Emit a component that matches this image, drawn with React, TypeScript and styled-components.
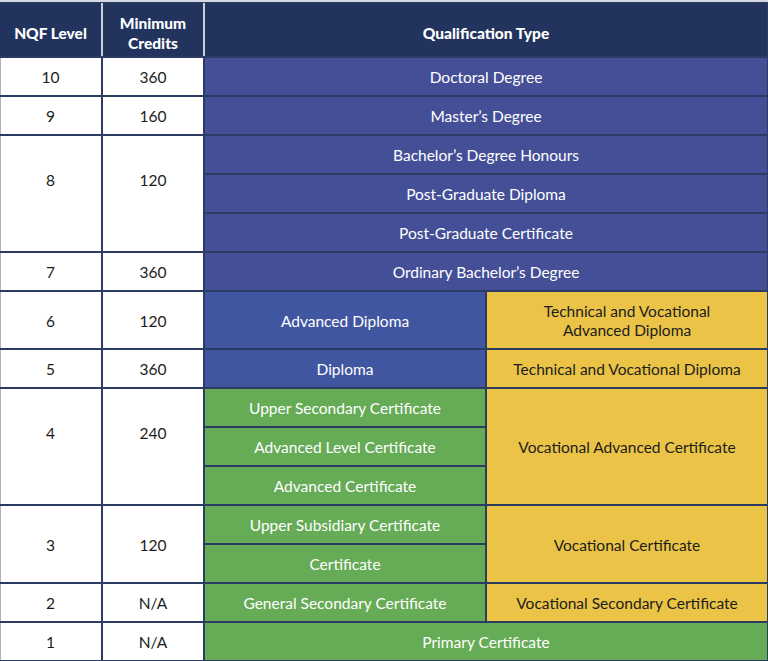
import React from "react";
import styled, { createGlobalStyle, css } from "styled-components";

const GlobalStyle = createGlobalStyle`
  html, body { margin: 0; padding: 0; background: #ffffff; }
  body { font-family: Lato, "Noto Sans", sans-serif; }
`;

type Tone = "header" | "white" | "navy" | "blue" | "green" | "yellow";

const tones: Record<Tone, { bg: string; fg: string }> = {
  header: { bg: "#22345e", fg: "#ffffff" },
  white: { bg: "#ffffff", fg: "#1c1c1c" },
  navy: { bg: "#444f97", fg: "#ffffff" },
  blue: { bg: "#4156a0", fg: "#ffffff" },
  green: { bg: "#66ab56", fg: "#ffffff" },
  yellow: { bg: "#ebc447", fg: "#1c1c1c" },
};

const Frame = styled.div`
  padding-top: 2px;
  background: #d3d8e2;
  width: 768px;
`;

const Table = styled.div`
  display: grid;
  grid-template-columns: 101px 100px 280px 280px;
  grid-template-rows: 53px repeat(6, 37px) 56px repeat(8, 37px);
  column-gap: 2px;
  row-gap: 2px;
  padding: 1px 1px 1px 0;
  background: #2c3b62;
`;

const Cell = styled.div<{
  $tone: Tone;
  $col: number;
  $row: number;
  $colSpan?: number;
  $rowSpan?: number;
  $edge?: boolean;
  $divider?: boolean;
  $lift?: boolean;
}>`
  grid-column: ${(p) => p.$col} / span ${(p) => p.$colSpan ?? 1};
  grid-row: ${(p) => p.$row} / span ${(p) => p.$rowSpan ?? 1};
  display: flex;
  align-items: center;
  justify-content: center;
  text-align: center;
  padding-top: 2px;
  padding-bottom: ${(p) => (p.$lift ? "28px" : "0")};
  background: ${(p) => tones[p.$tone].bg};
  color: ${(p) => tones[p.$tone].fg};
  font-size: 15.5px;
  line-height: 19px;
  font-weight: 400;
  ${(p) =>
    p.$edge &&
    css`
      box-shadow: inset 1px 0 0 #a9b2c7;
    `}
  ${(p) =>
    p.$divider &&
    css`
      box-shadow: 2px 0 0 #c9cfdc;
    `}
`;

const HeadCell = styled(Cell)`
  padding-top: 6px;
  font-size: 15.5px;
  line-height: 20px;
  font-weight: 900;
`;

type Entry = {
  text: React.ReactNode;
  tone: Tone;
  col: number;
  row: number;
  colSpan?: number;
  rowSpan?: number;
};

const levels: { level: string; credits: string; row: number; span: number }[] = [
  { level: "10", credits: "360", row: 2, span: 1 },
  { level: "9", credits: "160", row: 3, span: 1 },
  { level: "8", credits: "120", row: 4, span: 3 },
  { level: "7", credits: "360", row: 7, span: 1 },
  { level: "6", credits: "120", row: 8, span: 1 },
  { level: "5", credits: "360", row: 9, span: 1 },
  { level: "4", credits: "240", row: 10, span: 3 },
  { level: "3", credits: "120", row: 13, span: 2 },
  { level: "2", credits: "N/A", row: 15, span: 1 },
  { level: "1", credits: "N/A", row: 16, span: 1 },
];

const quals: Entry[] = [
  { text: "Doctoral Degree", tone: "navy", col: 3, row: 2, colSpan: 2 },
  { text: "Master’s Degree", tone: "navy", col: 3, row: 3, colSpan: 2 },
  { text: "Bachelor’s Degree Honours", tone: "navy", col: 3, row: 4, colSpan: 2 },
  { text: "Post-Graduate Diploma", tone: "navy", col: 3, row: 5, colSpan: 2 },
  { text: "Post-Graduate Certificate", tone: "navy", col: 3, row: 6, colSpan: 2 },
  { text: "Ordinary Bachelor’s Degree", tone: "navy", col: 3, row: 7, colSpan: 2 },
  { text: "Advanced Diploma", tone: "blue", col: 3, row: 8 },
  {
    text: (
      <>
        Technical and Vocational
        <br />
        Advanced Diploma
      </>
    ),
    tone: "yellow",
    col: 4,
    row: 8,
  },
  { text: "Diploma", tone: "blue", col: 3, row: 9 },
  { text: "Technical and Vocational Diploma", tone: "yellow", col: 4, row: 9 },
  { text: "Upper Secondary Certificate", tone: "green", col: 3, row: 10 },
  { text: "Advanced Level Certificate", tone: "green", col: 3, row: 11 },
  { text: "Advanced Certificate", tone: "green", col: 3, row: 12 },
  { text: "Vocational Advanced Certificate", tone: "yellow", col: 4, row: 10, rowSpan: 3 },
  { text: "Upper Subsidiary Certificate", tone: "green", col: 3, row: 13 },
  { text: "Certificate", tone: "green", col: 3, row: 14 },
  { text: "Vocational Certificate", tone: "yellow", col: 4, row: 13, rowSpan: 2 },
  { text: "General Secondary Certificate", tone: "green", col: 3, row: 15 },
  { text: "Vocational Secondary Certificate", tone: "yellow", col: 4, row: 15 },
  { text: "Primary Certificate", tone: "green", col: 3, row: 16, colSpan: 2 },
];

export default function App() {
  return (
    <>
      <GlobalStyle />
      <Frame>
        <Table>
          <HeadCell $tone="header" $col={1} $row={1} $divider>
            NQF Level
          </HeadCell>
          <HeadCell $tone="header" $col={2} $row={1} $divider>
            Minimum
            <br />
            Credits
          </HeadCell>
          <HeadCell $tone="header" $col={3} $row={1} $colSpan={2}>
            Qualification Type
          </HeadCell>
          {levels.map((l) => (
            <React.Fragment key={l.level}>
              <Cell
                $tone="white"
                $col={1}
                $row={l.row}
                $rowSpan={l.span}
                $lift={l.span === 3}
                $edge
              >
                {l.level}
              </Cell>
              <Cell
                $tone="white"
                $col={2}
                $row={l.row}
                $rowSpan={l.span}
                $lift={l.span === 3}
              >
                {l.credits}
              </Cell>
            </React.Fragment>
          ))}
          {quals.map((q, i) => (
            <Cell
              key={i}
              $tone={q.tone}
              $col={q.col}
              $row={q.row}
              $colSpan={q.colSpan}
              $rowSpan={q.rowSpan}
            >
              {q.text}
            </Cell>
          ))}
        </Table>
      </Frame>
    </>
  );
}
